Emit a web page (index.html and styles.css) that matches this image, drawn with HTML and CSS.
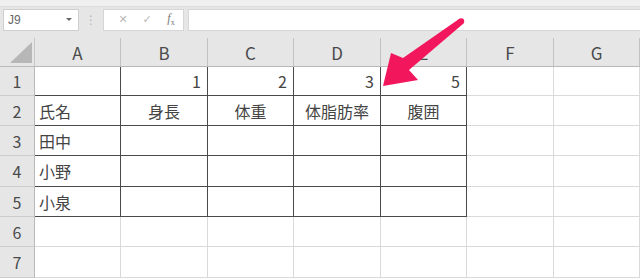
FILE: index.html
```html
<!DOCTYPE html>
<html lang="ja">
<head>
<meta charset="utf-8">
<link rel="stylesheet" href="styles.css">
</head>
<body>
<div class="app">
  <div class="ribbon-edge"></div>
  <div class="fbar">
    <div class="namebox"><span class="ref">J9</span><span class="caret"></span></div>
    <div class="grip">⋮</div>
    <div class="fxbox">
      <span class="ico x">✕</span>
      <span class="ico check">✓</span>
      <span class="ico fx"><i>f</i><sub>x</sub></span>
    </div>
    <div class="input"></div>
  </div>
  <div class="sheet">
    <div class="corner"><svg width="35" height="29" viewBox="0 0 35 29"><polygon points="10,25 32,4 32,25" fill="#b7b7b7"/></svg></div>
    <div class="ch">A</div><div class="ch">B</div><div class="ch">C</div><div class="ch">D</div><div class="ch">E</div><div class="ch">F</div><div class="ch">G</div>

    <div class="rh">1</div>
    <div class="c b"></div><div class="c b num">1</div><div class="c b num">2</div><div class="c b num">3</div><div class="c b num">5</div><div class="c"></div><div class="c"></div>

    <div class="rh">2</div>
    <div class="c b">氏名</div><div class="c b ctr">身長</div><div class="c b ctr">体重</div><div class="c b ctr">体脂肪率</div><div class="c b ctr">腹囲</div><div class="c"></div><div class="c"></div>

    <div class="rh">3</div>
    <div class="c b">田中</div><div class="c b"></div><div class="c b"></div><div class="c b"></div><div class="c b"></div><div class="c"></div><div class="c"></div>

    <div class="rh">4</div>
    <div class="c b">小野</div><div class="c b"></div><div class="c b"></div><div class="c b"></div><div class="c b"></div><div class="c"></div><div class="c"></div>

    <div class="rh">5</div>
    <div class="c b">小泉</div><div class="c b"></div><div class="c b"></div><div class="c b"></div><div class="c b"></div><div class="c"></div><div class="c"></div>

    <div class="rh">6</div>
    <div class="c"></div><div class="c"></div><div class="c"></div><div class="c"></div><div class="c"></div><div class="c"></div><div class="c"></div>

    <div class="rh">7</div>
    <div class="c"></div><div class="c"></div><div class="c"></div><div class="c"></div><div class="c"></div><div class="c"></div><div class="c"></div>
  </div>
  <svg class="arrow" width="640" height="278" viewBox="0 0 640 278">
    <polygon fill="#f2175c" points="459,19 403,58 391,53 383,86 418,80 409,70 463.5,23.5"/>
    <circle cx="461.2" cy="21.3" r="3" fill="#f2175c"/>
  </svg>
</div>
</body>
</html>
```

FILE: styles.css
```css
* { box-sizing: border-box; }
html, body { margin: 0; padding: 0; }
body {
  width: 640px;
  height: 278px;
  overflow: hidden;
  background: #fff;
  font-family: "Noto Sans CJK JP", "Noto Sans", sans-serif;
}
.app {
  position: relative;
  width: 640px;
  height: 278px;
  background: #e6e6e6;
}
.ribbon-edge {
  height: 7px;
  background: #f0f0f0;
  border-bottom: 1px solid #dcdcdc;
}
.fbar {
  display: flex;
  align-items: center;
  height: 31px;
  padding: 1px 0 7px 3px;
}
.namebox {
  width: 76px;
  height: 22px;
  background: #fff;
  border: 1px solid #cfcfcf;
  display: flex;
  align-items: center;
  justify-content: space-between;
  padding: 0 6px 0 4px;
}
.ref {
  font-family: "Liberation Sans", sans-serif;
  font-size: 12px;
  color: #666;
}
.caret {
  width: 0;
  height: 0;
  border-left: 3px solid transparent;
  border-right: 3px solid transparent;
  border-top: 3px solid #666;
}
.grip {
  width: 24px;
  text-align: center;
  color: #b5b5b5;
  font-size: 12px;
  font-family: "DejaVu Sans", sans-serif;
}
.fxbox {
  width: 81px;
  height: 22px;
  background: #fff;
  border: 1px solid #d6d6d6;
  display: flex;
  align-items: center;
  padding-left: 7px;
}
.ico {
  color: #b9b9b9;
  font-family: "DejaVu Sans", sans-serif;
  font-size: 11px;
  width: 26px;
  text-align: center;
}
.ico.fx {
  font-family: "Liberation Serif", serif;
  color: #777;
  font-size: 12px;
}
.ico.fx sub { font-size: 8px; }
.input {
  margin-left: 4px;
  flex: 1;
  height: 22px;
  background: #fff;
  border: 1px solid #d6d6d6;
  border-right: none;
}
.sheet {
  display: grid;
  grid-template-columns: 35px 86px 87px 86px 87px 86px 87px 86px;
  grid-template-rows: 29px 29px 30px 30px 31px 30px 30px 31px;
}
.corner {
  background: #e6e6e6;
  border-right: 1px solid #c6c6c6;
  border-bottom: 1px solid #b9b9b9;
  height: 29px;
}
.corner svg { display: block; }
.ch {
  background: #e6e6e6;
  border-right: 1px solid #c2c2c2;
  border-bottom: 1px solid #b9b9b9;
  display: flex;
  align-items: center;
  justify-content: center;
  font-size: 17px;
  color: #4a4a4a;
  padding-top: 1px;
}
.rh {
  background: #e6e6e6;
  border-right: 1px solid #b9b9b9;
  border-bottom: 1px solid #cdcdcd;
  display: flex;
  align-items: center;
  justify-content: center;
  font-size: 16px;
  color: #4a4a4a;
}
.c {
  background: #fff;
  border-right: 1px solid #dadada;
  border-bottom: 1px solid #dadada;
  display: flex;
  align-items: center;
  padding: 0 4px;
  font-size: 16px;
  color: #444;
  white-space: nowrap;
}
.c.b {
  border-right-color: #4a4a4a;
  border-bottom-color: #4a4a4a;
}
.c.num {
  justify-content: flex-end;
  padding-right: 6px;
}
.c.ctr {
  justify-content: center;
}
.arrow {
  position: absolute;
  left: 0;
  top: 0;
  pointer-events: none;
}
```
